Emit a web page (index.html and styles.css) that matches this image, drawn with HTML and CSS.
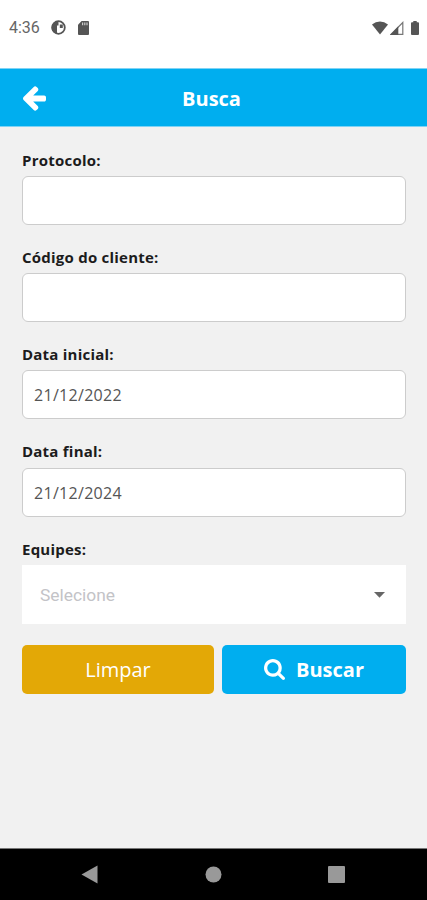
FILE: index.html
```html
<!DOCTYPE html>
<html lang="pt-BR">
<head>
<meta charset="utf-8">
<meta name="viewport" content="width=device-width, initial-scale=1">
<title>Busca</title>
<link rel="stylesheet" href="styles.css">
</head>
<body>
<div class="status">
  <span class="clock">4:36</span>
  <svg class="status-app" width="15" height="15" viewBox="0 0 15 15"><circle cx="7.500" cy="7.500" r="6.300" fill="#fff" stroke="#555" stroke-width="1.800"/><path d="M7.500 1.200A6.300 6.300 0 0 0 4 13l2 .500V5.500h1.500z" fill="#555"/><path d="M8.800 4.500h3v3.500h-3z" fill="#555"/></svg>
  <svg class="status-card" width="11" height="14" viewBox="0 0 11 14"><path d="M3.600 0H10q1 0 1 1v12q0 1-1 1H1q-1 0-1-1V3.800z" fill="#555"/><path d="M4 1.600h1.200v2.600H4zM6.200 1.600h1.200v2.600H6.200zM8.400 1.600h1.200v2.600H8.400z" fill="#ccc"/></svg>
  <span class="spacer"></span>
  <svg class="wifi" width="16" height="14" viewBox="0 0 16 14"><path d="M0 3.600Q3.600.500 8 .500t8 3.100L8 13.500z" fill="#555"/></svg>
  <svg class="signal" width="14" height="14" viewBox="0 0 14 14"><path d="M12.800 1.500v11.800H1z" fill="#fff" stroke="#777" stroke-width="1.200"/><path d="M8.300 5.300V14H0z" fill="#555"/></svg>
  <svg class="battery" width="8" height="14" viewBox="0 0 8 14"><path d="M2.300 0h3.400v1.300H7q1 0 1 1V13q0 1-1 1H1q-1 0-1-1V2.300q0-1 1-1h1.300z" fill="#555"/></svg>
</div>
<header class="header">
  <svg class="back" viewBox="192 187 1472 1546"><path fill="#fff" d="M1664 896v128q0 53-32.500 90.500t-84.500 37.500h-704l293 294q38 36 38 90t-38 90l-75 76q-37 37-90 37-52 0-91-37l-651-652q-37-37-37-90 0-52 37-91l651-650q38-38 91-38 52 0 90 38l75 74q38 38 38 91t-38 91l-293 293h704q52 0 84.500 37.500t32.500 90.500z"/></svg>
  <h1 class="title">Busca</h1>
</header>
<main class="form">
  <div class="field"><div class="label">Protocolo:</div><div class="input"></div></div>
  <div class="field"><div class="label">Código do cliente:</div><div class="input"></div></div>
  <div class="field"><div class="label">Data inicial:</div><div class="input">21/12/2022</div></div>
  <div class="field"><div class="label">Data final:</div><div class="input">21/12/2024</div></div>
  <div class="field"><div class="label">Equipes:</div>
    <div class="select"><span>Selecione</span><svg width="11" height="6" viewBox="0 0 11 6"><path d="M0 0h11L5.500 5.800z" fill="#666"/></svg></div>
  </div>
  <div class="actions">
    <div class="btn clear">Limpar</div>
    <div class="btn search"><svg width="21" height="21" viewBox="64 128 1664 1664"><path fill="#fff" d="M1216 832q0-185-131.500-316.500t-316.500-131.500-316.500 131.500-131.500 316.500 131.500 316.500 316.500 131.500 316.500-131.500 131.500-316.500zm512 832q0 52-38 90t-90 38q-54 0-90-38l-343-342q-179 124-399 124-143 0-273.500-55.500t-225-150-150-225-55.500-273.500 55.500-273.500 150-225 225-150 273.500-55.500 273.500 55.500 225 150 150 225 55.500 273.500q0 220-124 399l343 343q37 37 37 90z"/></svg><span>Buscar</span></div>
  </div>
</main>
<nav class="nav">
  <svg width="17" height="19" viewBox="0 0 17 19"><path d="M16.500.500v18L.500 9.500z" fill="#999"/></svg>
  <svg width="17" height="17" viewBox="0 0 17 17"><circle cx="8.500" cy="8.500" r="8" fill="#999"/></svg>
  <svg width="17" height="17" viewBox="0 0 17 17"><rect width="17" height="17" rx="1" fill="#999"/></svg>
</nav>
</body>
</html>
```
FILE: styles.css
```css
* { box-sizing: border-box; }
body {
  margin: 0;
  height: 900px;
  display: flex;
  flex-direction: column;
  background: #f1f1f1;
  font-family: "Open Sans", sans-serif;
  overflow: hidden;
}
svg { display: block; flex: none; }
.status {
  height: 68px;
  padding: 0 8px 13px 9px;
  display: flex;
  align-items: center;
  background: #fff;
}
.clock { width: 42px; font: 16px/20px Roboto, sans-serif; color: #666; }
.status-card { margin-left: 12px; }
.spacer { flex: 1; }
.signal { margin: 0 7px 0 2px; }
.header {
  height: 59px;
  display: grid;
  grid-template-columns: 23px 1fr 23px;
  align-items: center;
  padding: 1px 27px 0 23px;
  background: #00aeef;
  border-top: 1px solid #7fd3f5;
  border-bottom: 1px solid #7fd3f5;
}
.back { width: 23px; height: 25px; }
.title { margin: 0; padding-top: 1px; font-size: 20px; line-height: 28px; font-weight: 700; color: #fff; text-align: center; }
.form { flex: 1; padding: 22.500px 21px 0 22px; }
.field { margin-bottom: 22px; }
.field:nth-child(5) { margin-bottom: 21px; }
.label {
  height: 22px;
  margin-bottom: 4.300px;
  font-size: 15px;
  line-height: 20px;
  font-weight: 700;
  letter-spacing: 0.230px;
  color: #1c1c1c;
}
.input {
  height: 49px;
  padding: 0 11px;
  border: 1.500px solid #ccc;
  border-radius: 6px;
  background: #fff;
  font-size: 16px;
  line-height: 48px;
  letter-spacing: 0.300px;
  color: #555;
}
.select {
  height: 59px;
  padding: 1px 21px 0 18px;
  display: flex;
  align-items: center;
  justify-content: space-between;
  background: #fff;
  font: 17.400px/24px Roboto, sans-serif;
  color: #c3c3c7;
}
.actions { display: grid; grid-template-columns: 192px 184px; gap: 8px; }
.btn {
  height: 49px;
  border-radius: 5px;
  display: flex;
  align-items: center;
  justify-content: center;
  gap: 11px;
  font-size: 20px;
  color: #fff;
}
.clear { background: #e3a806; }
.search { background: #00aeef; font-weight: 700; }
.nav {
  height: 52px;
  padding: 0 82px 0 81px;
  display: flex;
  align-items: center;
  justify-content: space-between;
  background: #000;
  border-top: 1px solid #777;
}
```
